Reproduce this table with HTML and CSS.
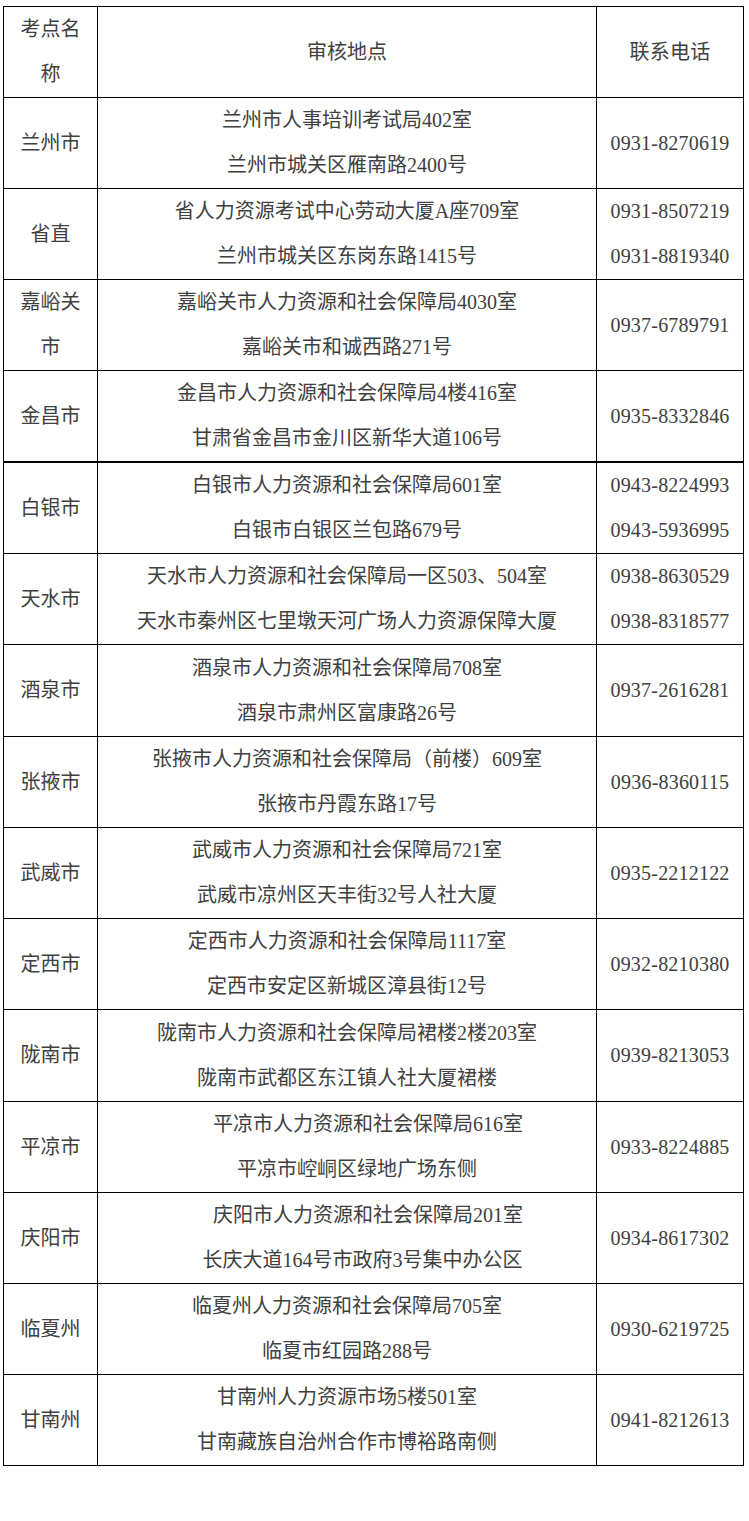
FILE: index.html
```html
<!DOCTYPE html>
<html lang="zh-CN">
<head>
<meta charset="utf-8">
<title>审核地点</title>
<link rel="stylesheet" href="styles.css">
</head>
<body>
<table class="sites">
  <colgroup>
    <col class="c-name">
    <col class="c-addr">
    <col class="c-tel">
  </colgroup>
  <thead>
    <tr>
      <th class="name">考点名称</th>
      <th class="addr">审核地点</th>
      <th class="tel">联系电话</th>
    </tr>
  </thead>
  <tbody>
    <tr>
      <td class="name">兰州市</td>
      <td class="addr"><div>兰州市人事培训考试局402室</div><div>兰州市城关区雁南路2400号</div></td>
      <td class="tel">0931-8270619</td>
    </tr>
    <tr>
      <td class="name">省直</td>
      <td class="addr"><div>省人力资源考试中心劳动大厦A座709室</div><div>兰州市城关区东岗东路1415号</div></td>
      <td class="tel"><div>0931-8507219</div><div>0931-8819340</div></td>
    </tr>
    <tr>
      <td class="name">嘉峪关市</td>
      <td class="addr"><div>嘉峪关市人力资源和社会保障局4030室</div><div>嘉峪关市和诚西路271号</div></td>
      <td class="tel">0937-6789791</td>
    </tr>
    <tr>
      <td class="name">金昌市</td>
      <td class="addr"><div>金昌市人力资源和社会保障局4楼416室</div><div>甘肃省金昌市金川区新华大道106号</div></td>
      <td class="tel">0935-8332846</td>
    </tr>
    <tr class="thick">
      <td class="name">白银市</td>
      <td class="addr"><div>白银市人力资源和社会保障局601室</div><div>白银市白银区兰包路679号</div></td>
      <td class="tel"><div>0943-8224993</div><div>0943-5936995</div></td>
    </tr>
    <tr>
      <td class="name">天水市</td>
      <td class="addr"><div>天水市人力资源和社会保障局一区503、504室</div><div>天水市秦州区七里墩天河广场人力资源保障大厦</div></td>
      <td class="tel"><div>0938-8630529</div><div>0938-8318577</div></td>
    </tr>
    <tr class="tall">
      <td class="name">酒泉市</td>
      <td class="addr"><div>酒泉市人力资源和社会保障局708室</div><div>酒泉市肃州区富康路26号</div></td>
      <td class="tel">0937-2616281</td>
    </tr>
    <tr>
      <td class="name">张掖市</td>
      <td class="addr"><div>张掖市人力资源和社会保障局（前楼）609室</div><div>张掖市丹霞东路17号</div></td>
      <td class="tel">0936-8360115</td>
    </tr>
    <tr>
      <td class="name">武威市</td>
      <td class="addr"><div>武威市人力资源和社会保障局721室</div><div>武威市凉州区天丰街32号人社大厦</div></td>
      <td class="tel">0935-2212122</td>
    </tr>
    <tr>
      <td class="name">定西市</td>
      <td class="addr"><div>定西市人力资源和社会保障局1117室</div><div>定西市安定区新城区漳县街12号</div></td>
      <td class="tel">0932-8210380</td>
    </tr>
    <tr class="tall">
      <td class="name">陇南市</td>
      <td class="addr"><div>陇南市人力资源和社会保障局裙楼2楼203室</div><div>陇南市武都区东江镇人社大厦裙楼</div></td>
      <td class="tel">0939-8213053</td>
    </tr>
    <tr>
      <td class="name">平凉市</td>
      <td class="addr"><div class="in2">平凉市人力资源和社会保障局616室</div><div class="in1">平凉市崆峒区绿地广场东侧</div></td>
      <td class="tel">0933-8224885</td>
    </tr>
    <tr>
      <td class="name">庆阳市</td>
      <td class="addr"><div class="in2">庆阳市人力资源和社会保障局201室</div><div class="in15">长庆大道164号市政府3号集中办公区</div></td>
      <td class="tel">0934-8617302</td>
    </tr>
    <tr>
      <td class="name">临夏州</td>
      <td class="addr"><div>临夏州人力资源和社会保障局705室</div><div>临夏市红园路288号</div></td>
      <td class="tel">0930-6219725</td>
    </tr>
    <tr>
      <td class="name">甘南州</td>
      <td class="addr"><div>甘南州人力资源市场5楼501室</div><div>甘南藏族自治州合作市博裕路南侧</div></td>
      <td class="tel">0941-8212613</td>
    </tr>
  </tbody>
</table>
</body>
</html>
```

FILE: styles.css
```css
html, body {
  margin: 0;
  padding: 0;
  background: #ffffff;
}

body {
  padding: 6px 0 0 3px;
  font-family: "Liberation Serif", "Noto Sans CJK SC", serif;
  font-size: 20px;
  color: #404040;
}

.sites {
  border-collapse: collapse;
  table-layout: fixed;
  width: 740px;
}

.c-name { width: 94px; }
.c-addr { width: 499px; }
.c-tel  { width: 147px; }

.sites th,
.sites td {
  border: 1px solid #000000;
  padding: 0;
  line-height: 45px;
  height: 90px;
  text-align: center;
  vertical-align: middle;
  font-weight: normal;
  white-space: normal;
}

.sites .name {
  padding: 0 8px;
}

.sites .tel {
  letter-spacing: 0.2px;
}

.sites .addr div,
.sites .tel div {
  white-space: nowrap;
}

.sites tr.thick td {
  border-top: 2px solid #000000;
  height: 89px;
}

.sites tr.tall td {
  height: 91px;
}

.in1 { padding-left: 20px; }
.in15 { padding-left: 31px; }
.in2 { padding-left: 42px; }
```
